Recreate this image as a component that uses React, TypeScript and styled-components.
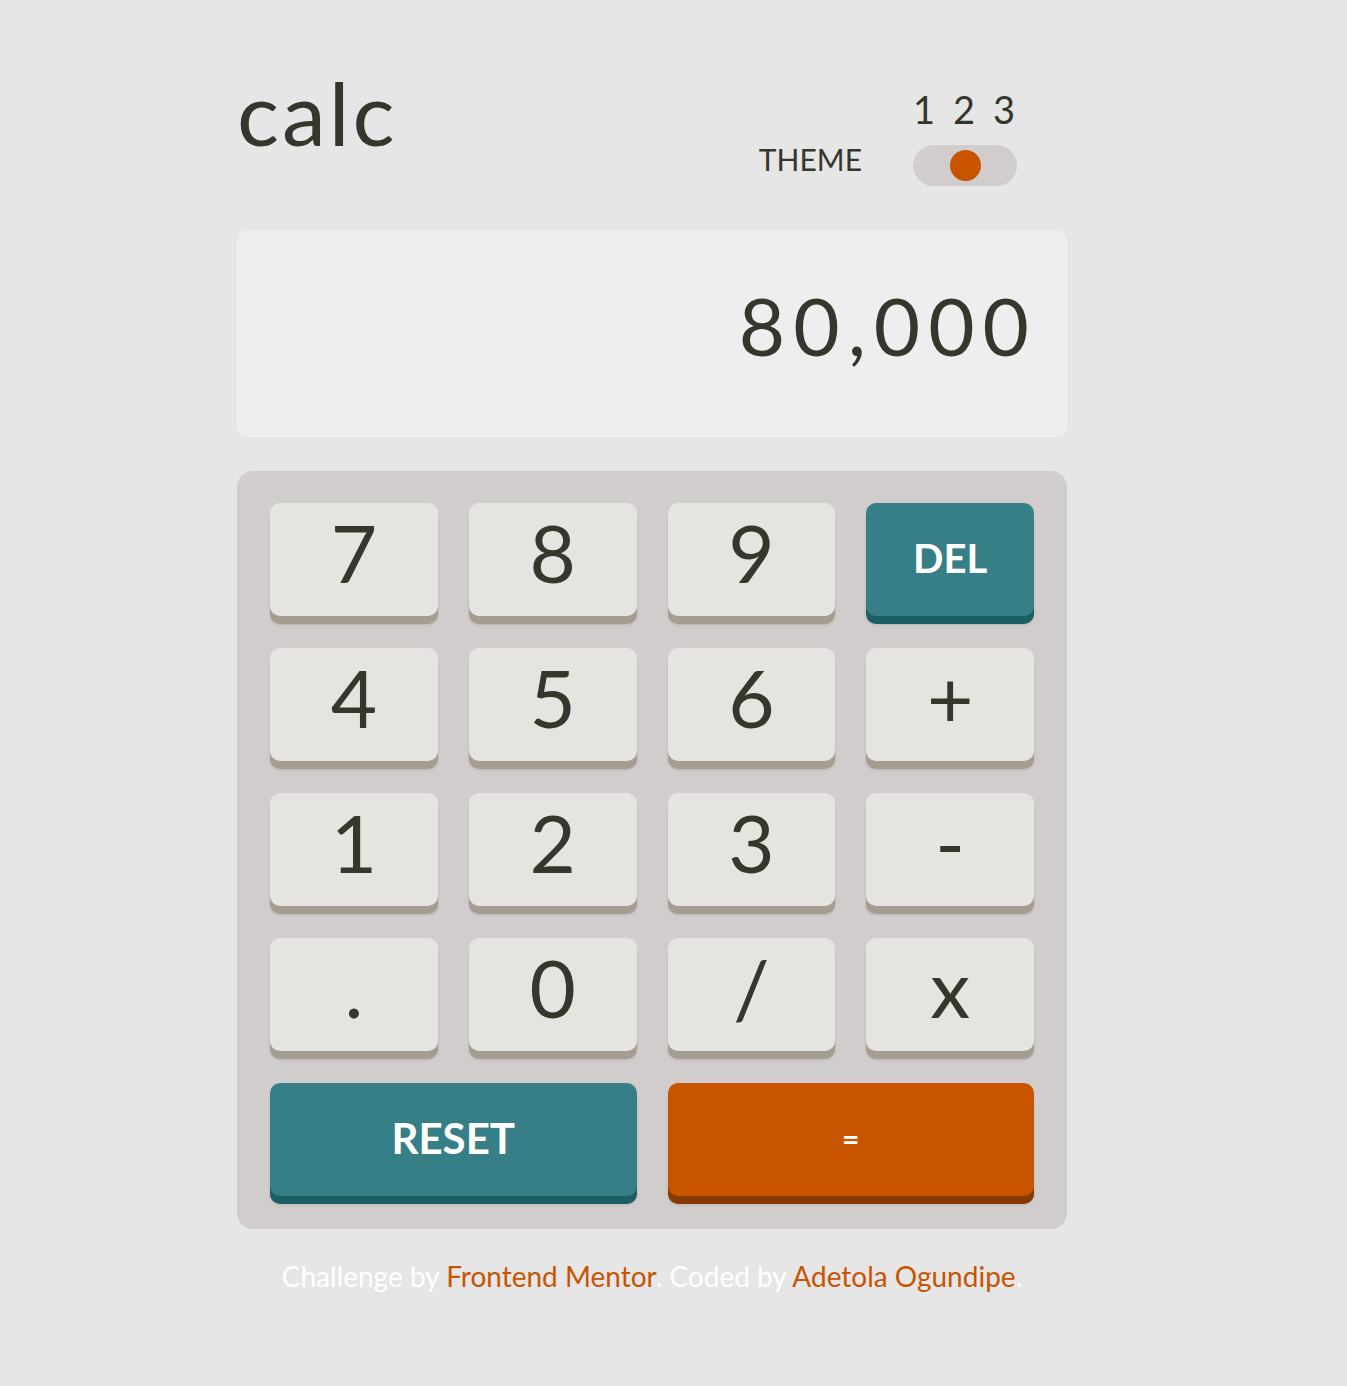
import React from "react";
import styled, { createGlobalStyle } from "styled-components";

const Global = createGlobalStyle`
  html, body { margin: 0; padding: 0; background: #e6e6e6; }
  body { font-family: Lato, "Open Sans", sans-serif; color: #36362c; }
`;

const Page = styled.main`
  width: 830px;
  margin: 0 0 0 237px;
  padding: 60px 0 80px;
`;

const Header = styled.header`
  height: 170px;
  display: flex;
  justify-content: space-between;
  align-items: flex-start;
  padding-right: 50px;
`;

const Logo = styled.h1`
  margin: 8px 0 0 0;
  font-size: 88px;
  line-height: 1;
  font-weight: 400;
  letter-spacing: 3px;
`;

const Theme = styled.div`
  margin-top: 30px;
  display: flex;
  align-items: flex-end;
  gap: 51px;
`;

const ThemeLabel = styled.span`
  font-size: 30px;
  line-height: 1;
  margin-bottom: 12px;
  letter-spacing: 0;
`;

const ToggleGroup = styled.div`
  display: flex;
  flex-direction: column;
  width: 104px;
`;

const Numbers = styled.div`
  display: flex;
  justify-content: space-between;
  padding: 0 4px 0 0;
  font-size: 38px;
  line-height: 1;
  margin-bottom: 17px;
  & span { width: 20px; text-align: center; }
`;

const Track = styled.div`
  height: 41px;
  border-radius: 21px;
  background: #d2cdcd;
  display: flex;
  align-items: center;
  justify-content: center;
`;

const Knob = styled.div`
  width: 31px;
  height: 31px;
  border-radius: 50%;
  background: #c85402;
`;

const Display = styled.section`
  height: 207px;
  border-radius: 10px;
  background: #eeeeee;
  display: flex;
  align-items: center;
  justify-content: flex-end;
  padding: 0 30px 18px;
  box-sizing: border-box;
  font-size: 80px;
  letter-spacing: 8px;
  margin-bottom: 34px;
`;

const Keypad = styled.section`
  background: #d2cdcd;
  border-radius: 16px;
  padding: 32px 33px 33px;
  display: grid;
  grid-template-columns: repeat(4, 1fr);
  column-gap: 31px;
  row-gap: 32px;
`;

type Variant = "num" | "del" | "eq";

const colors: Record<Variant, { bg: string; sh: string; fg: string }> = {
  num: { bg: "#e5e4e1", sh: "#a69d91", fg: "#36362c" },
  del: { bg: "#377f86", sh: "#1b5f65", fg: "#ffffff" },
  eq: { bg: "#c85402", sh: "#873901", fg: "#ffffff" },
};

const Key = styled.button<{ $v: Variant; $wide?: boolean; $size: number; $weight?: number; $pb?: number }>`
  grid-column: ${(p) => (p.$wide ? "span 2" : "span 1")};
  height: 113px;
  border: none;
  border-radius: 10px;
  background: ${(p) => colors[p.$v].bg};
  color: ${(p) => colors[p.$v].fg};
  box-shadow: 0 8px 0 ${(p) => colors[p.$v].sh}, 0 9px 3px rgba(0, 0, 0, 0.12);
  font-family: Lato, "Open Sans", sans-serif;
  font-size: ${(p) => p.$size}px;
  font-weight: ${(p) => p.$weight ?? 400};
  line-height: 1;
  display: flex;
  align-items: center;
  justify-content: center;
  padding: 0 0 ${(p) => p.$pb ?? 16}px;
  cursor: pointer;
`;

const Footer = styled.footer`
  margin-top: 30px;
  text-align: center;
  font-size: 28px;
  color: #ffffff;
  & a { color: #c85402; text-decoration: none; }
`;

const digits = ["7", "8", "9"];

export default function App() {
  return (
    <>
      <Global />
      <Page>
        <Header>
          <Logo>calc</Logo>
          <Theme>
            <ThemeLabel>THEME</ThemeLabel>
            <ToggleGroup>
              <Numbers>
                <span>1</span>
                <span>2</span>
                <span>3</span>
              </Numbers>
              <Track>
                <Knob />
              </Track>
            </ToggleGroup>
          </Theme>
        </Header>
        <Display>80,000</Display>
        <Keypad>
          {digits.map((d) => (
            <Key key={d} $v="num" $size={80}>{d}</Key>
          ))}
          <Key $v="del" $size={40} $weight={700} $pb={4}>DEL</Key>
          <Key $v="num" $size={80}>4</Key>
          <Key $v="num" $size={80}>5</Key>
          <Key $v="num" $size={80}>6</Key>
          <Key $v="num" $size={80}>+</Key>
          <Key $v="num" $size={80}>1</Key>
          <Key $v="num" $size={80}>2</Key>
          <Key $v="num" $size={80}>3</Key>
          <Key $v="num" $size={80}>-</Key>
          <Key $v="num" $size={80}>.</Key>
          <Key $v="num" $size={80}>0</Key>
          <Key $v="num" $size={80}>/</Key>
          <Key $v="num" $size={80}>x</Key>
          <Key $v="del" $wide $size={42} $weight={700} $pb={4}>RESET</Key>
          <Key $v="eq" $wide $size={30} $weight={700} $pb={4}>=</Key>
        </Keypad>
        <Footer>
          Challenge by <a href="#">Frontend Mentor</a>. Coded by <a href="#">Adetola Ogundipe</a>.
        </Footer>
      </Page>
    </>
  );
}
